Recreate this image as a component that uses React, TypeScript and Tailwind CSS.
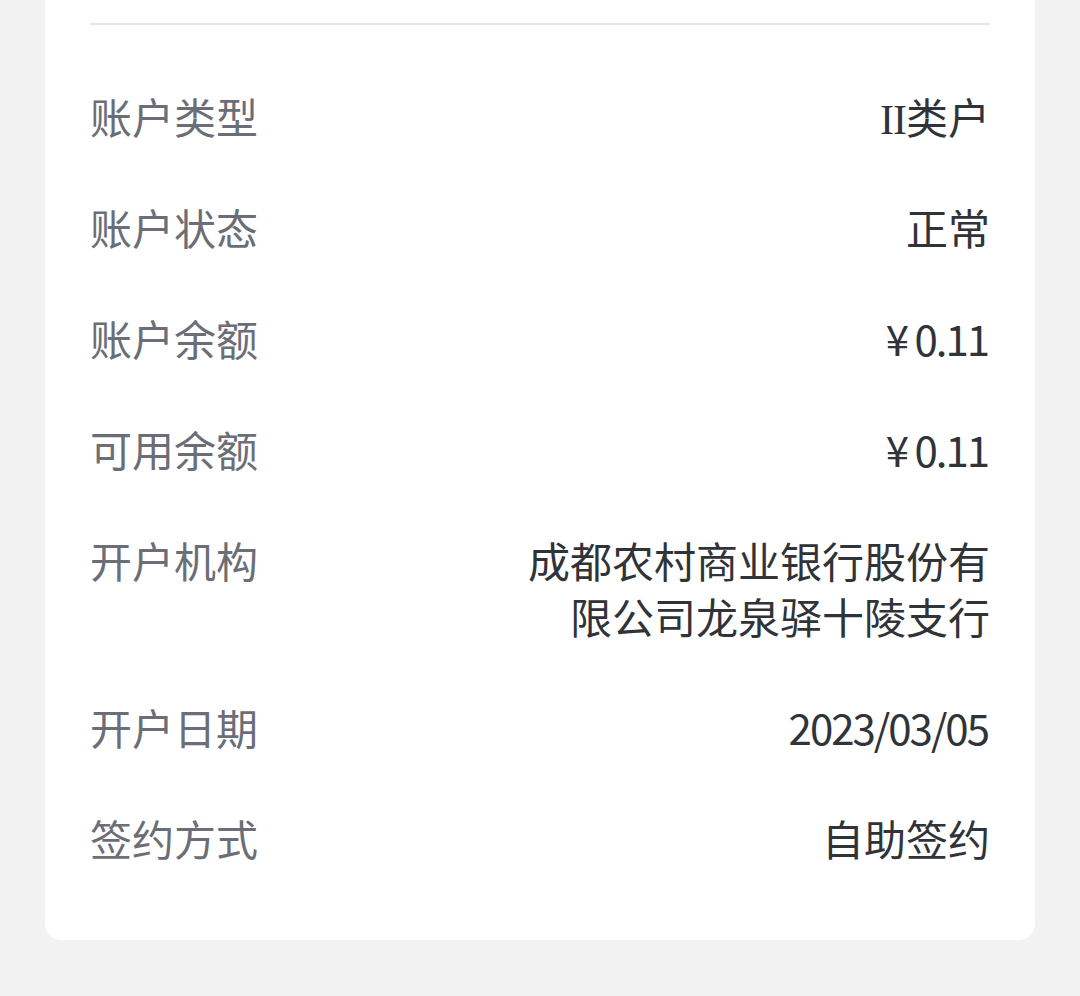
import React from "react";

const rows: { label: string; value: React.ReactNode }[] = [
  {
    label: "账户类型",
    value: (
      <>
        <span style={{ fontFamily: '"Liberation Serif", serif' }} className="leading-none tracking-[-1px]">II</span>类户
      </>
    ),
  },
  { label: "账户状态", value: "正常" },
  { label: "账户余额", value: <span className="mr-[2px] leading-none tracking-[-2px]">¥ 0.11</span> },
  { label: "可用余额", value: <span className="mr-[2px] leading-none tracking-[-2px]">¥ 0.11</span> },
  { label: "开户机构", value: "成都农村商业银行股份有限公司龙泉驿十陵支行" },
  { label: "开户日期", value: <span className="mr-[2px] leading-none tracking-[-2px]">2023/03/05</span> },
  { label: "签约方式", value: "自助签约" },
];

export default function App() {
  return (
    <div
      className="min-h-screen w-full bg-[#f2f2f2]"
      style={{ fontFamily: '"Noto Sans CJK SC", "Noto Sans", sans-serif' }}
    >
      <div className="mx-[45px] rounded-b-[16px] bg-white px-[45px] pt-[23px] pb-[74px]">
        <div className="h-[2px] bg-[#e4e4ec]" />
        <div className="flex flex-col gap-[55px] pt-[63px]">
          {rows.map((r) => (
            <div key={r.label} className="flex items-start justify-between text-[42px] leading-[56px]">
              <span className="shrink-0 text-[#6b6e76]">{r.label}</span>
              <span className="max-w-[470px] text-right text-[#303338]">{r.value}</span>
            </div>
          ))}
        </div>
      </div>
    </div>
  );
}
